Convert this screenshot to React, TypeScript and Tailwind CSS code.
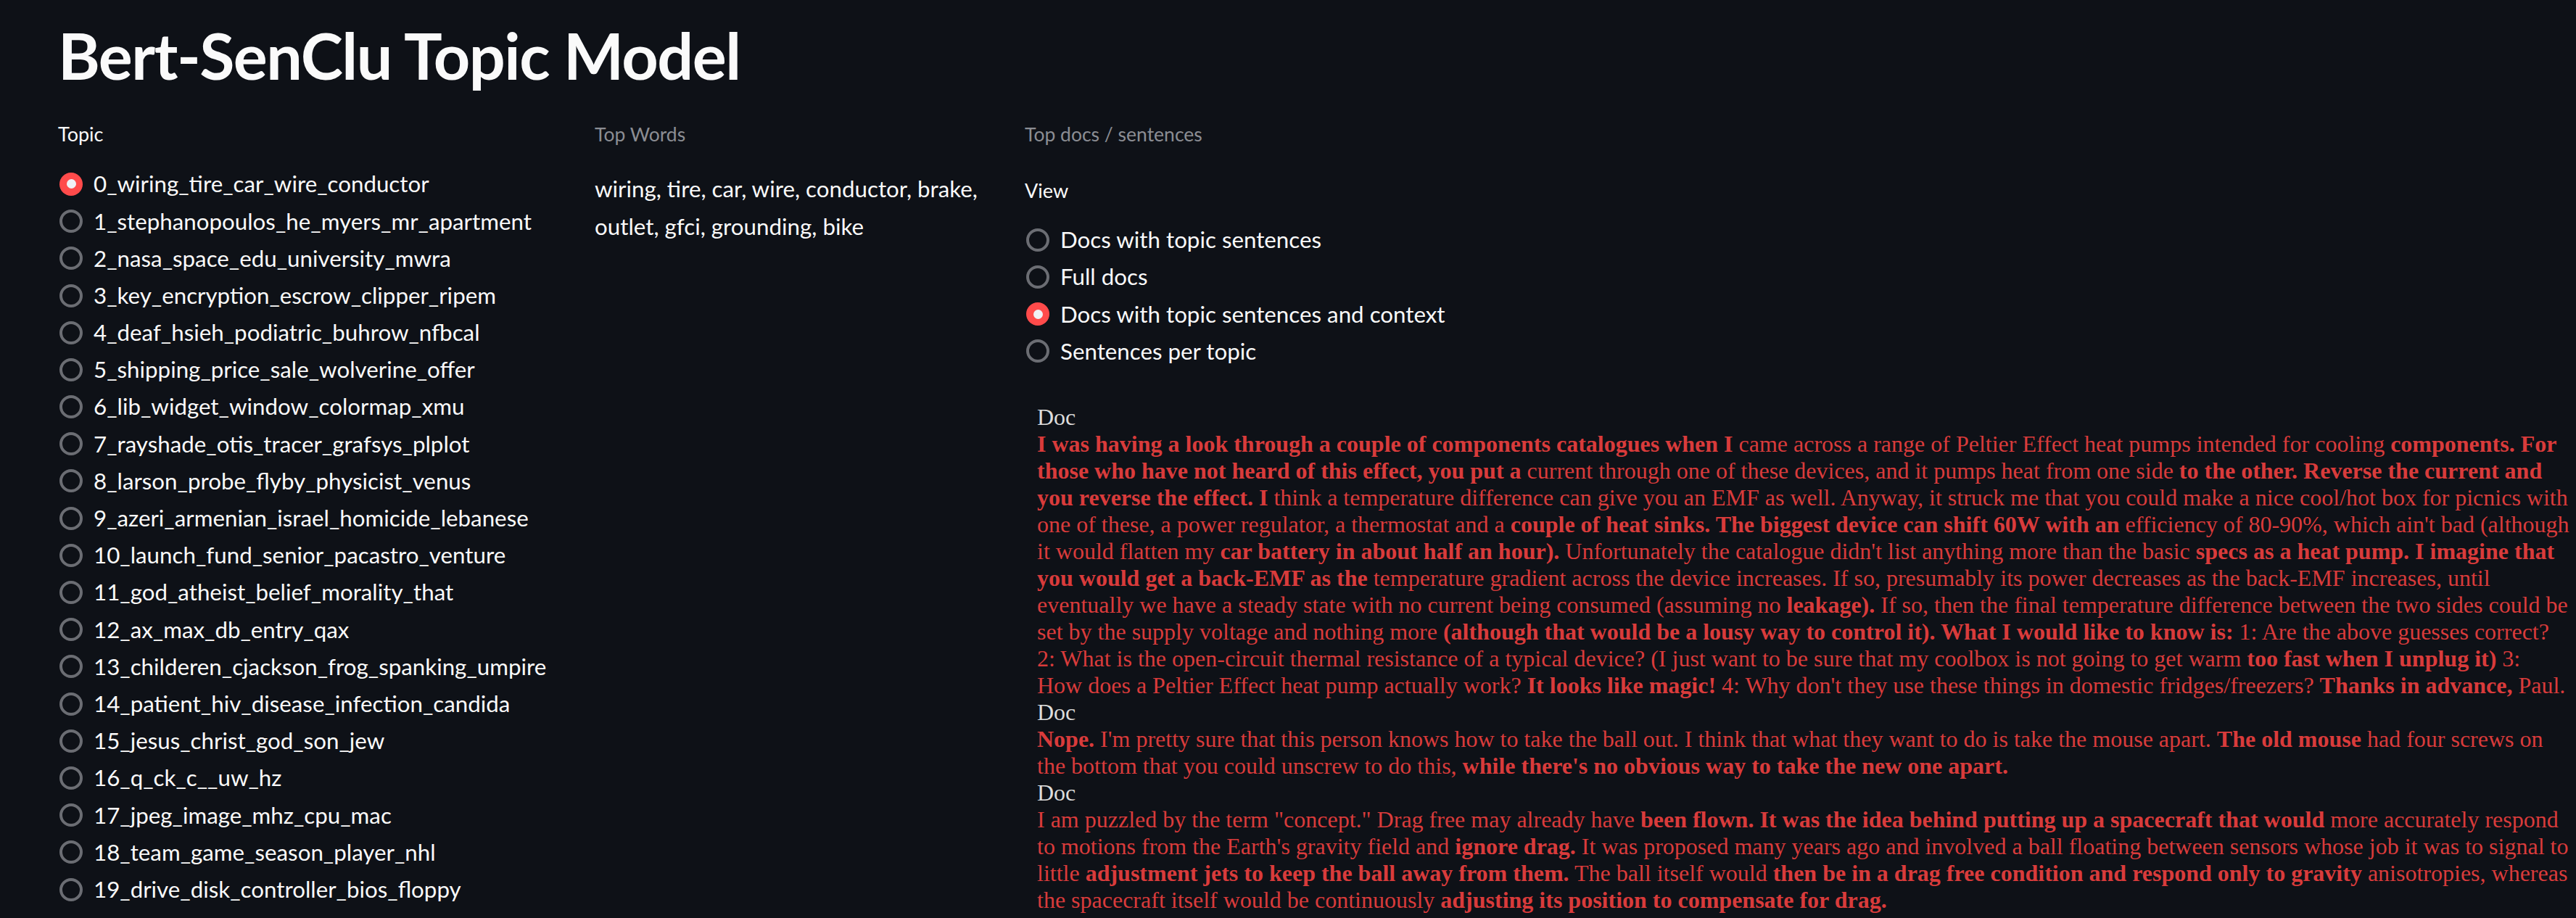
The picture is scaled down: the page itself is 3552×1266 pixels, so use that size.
import React from 'react';

const topics = [
  '0_wiring_tire_car_wire_conductor',
  '1_stephanopoulos_he_myers_mr_apartment',
  '2_nasa_space_edu_university_mwra',
  '3_key_encryption_escrow_clipper_ripem',
  '4_deaf_hsieh_podiatric_buhrow_nfbcal',
  '5_shipping_price_sale_wolverine_offer',
  '6_lib_widget_window_colormap_xmu',
  '7_rayshade_otis_tracer_grafsys_plplot',
  '8_larson_probe_flyby_physicist_venus',
  '9_azeri_armenian_israel_homicide_lebanese',
  '10_launch_fund_senior_pacastro_venture',
  '11_god_atheist_belief_morality_that',
  '12_ax_max_db_entry_qax',
  '13_childeren_cjackson_frog_spanking_umpire',
  '14_patient_hiv_disease_infection_candida',
  '15_jesus_christ_god_son_jew',
  '16_q_ck_c__uw_hz',
  '17_jpeg_image_mhz_cpu_mac',
  '18_team_game_season_player_nhl',
  '19_drive_disk_controller_bios_floppy',
];

const views = [
  'Docs with topic sentences',
  'Full docs',
  'Docs with topic sentences and context',
  'Sentences per topic',
];

// ** marks the sentences that belong to the topic
const docs: string[][] = [
  [
    '**I was having a look through a couple of components catalogues when I** came across a range of Peltier Effect heat pumps intended for cooling **components. For**',
    "**those who have not heard of this effect, you put a** current through one of these devices, and it pumps heat from one side **to the other. Reverse the current and**",
    '**you reverse the effect. I** think a temperature difference can give you an EMF as well. Anyway, it struck me that you could make a nice cool/hot box for picnics with',
    "one of these, a power regulator, a thermostat and a **couple of heat sinks. The biggest device can shift 60W with an** efficiency of 80-90%, which ain't bad (although",
    "it would flatten my **car battery in about half an hour).** Unfortunately the catalogue didn't list anything more than the basic **specs as a heat pump. I imagine that**",
    '**you would get a back-EMF as the** temperature gradient across the device increases. If so, presumably its power decreases as the back-EMF increases, until',
    'eventually we have a steady state with no current being consumed (assuming no **leakage).** If so, then the final temperature difference between the two sides could be',
    'set by the supply voltage and nothing more **(although that would be a lousy way to control it). What I would like to know is:** 1: Are the above guesses correct?',
    '2: What is the open-circuit thermal resistance of a typical device? (I just want to be sure that my coolbox is not going to get warm **too fast when I unplug it)** 3:',
    "How does a Peltier Effect heat pump actually work? **It looks like magic!** 4: Why don't they use these things in domestic fridges/freezers? **Thanks in advance,** Paul.",
  ],
  [
    "**Nope.** I'm pretty sure that this person knows how to take the ball out. I think that what they want to do is take the mouse apart. **The old mouse** had four screws on",
    "the bottom that you could unscrew to do this, **while there's no obvious way to take the new one apart.**",
  ],
  [
    'I am puzzled by the term "concept." Drag free may already have **been flown. It was the idea behind putting up a spacecraft that would** more accurately respond',
    "to motions from the Earth's gravity field and **ignore drag.** It was proposed many years ago and involved a ball floating between sensors whose job it was to signal to",
    'little **adjustment jets to keep the ball away from them.** The ball itself would **then be in a drag free condition and respond only to gravity** anisotropies, whereas',
    'the spacecraft itself would be continuously **adjusting its position to compensate for drag.**',
  ],
];

const Radio = ({ label, checked }: { label: string; checked?: boolean }) => (
  <div className="flex h-[51.2px] items-center">
    {checked ? (
      <span className="ml-[2px] flex h-[32px] w-[32px] shrink-0 items-center justify-center rounded-full bg-[#ff4b4b]">
        <span className="h-[13px] w-[13px] rounded-full bg-[#f0f2f6]" />
      </span>
    ) : (
      <span className="ml-[2px] h-[32px] w-[32px] shrink-0 rounded-full border-[4px] border-[#6b6d73]" />
    )}
    <span className="ml-[15px] whitespace-nowrap text-[31.3px] leading-none text-[#fafafa]">{label}</span>
  </div>
);

const DocLine = ({ text }: { text: string }) => (
  <div className="whitespace-nowrap">
    {text.split('**').map((part, i) =>
      i % 2 === 1 ? <b key={i} className="font-bold">{part}</b> : <span key={i}>{part}</span>
    )}
  </div>
);

export default function App() {
  return (
    <div className="min-h-[1266px] bg-[#0e1117] pl-[80px] font-['Lato',sans-serif] text-[#fafafa]">
      <h1 className="pt-[24px] text-[88px] font-bold leading-[1.2] tracking-[-1.5px]">Bert-SenClu Topic Model</h1>

      <div className="mt-[33px] grid grid-cols-[708px_561px_1fr] gap-x-[32px]">
        {/* Topic picker */}
        <div>
          <div className="text-[27px] leading-[44.8px]">Topic</div>
          <div className="mt-[21px]">
            {topics.map((t, i) => (
              <Radio key={t} label={t} checked={i === 0} />
            ))}
          </div>
        </div>

        {/* Top words */}
        <div>
          <div className="text-[26.5px] leading-[44.8px] text-[#8b8d93]">Top Words</div>
          <p className="mt-[28px] text-[31.3px] leading-[51.2px]">
            wiring, tire, car, wire, conductor, brake, outlet, gfci, grounding, bike
          </p>
        </div>

        {/* Top docs / sentences */}
        <div>
          <div className="text-[26.5px] leading-[44.8px] text-[#8b8d93]">Top docs / sentences</div>
          <div className="mt-[34px] text-[27px] leading-[44.8px]">View</div>
          <div className="mt-[19px]">
            {views.map((v, i) => (
              <Radio key={v} label={v} checked={i === 2} />
            ))}
          </div>

          <div className="mt-[47px] pl-[17px] font-['Liberation_Serif',serif] text-[32px] leading-[37px] text-[#d93b3b]">
            {docs.map((lines, d) => (
              <div key={d}>
                <div className="text-[#dcdcdc]">Doc</div>
                {lines.map((l, k) => (
                  <DocLine key={k} text={l} />
                ))}
              </div>
            ))}
          </div>
        </div>
      </div>
    </div>
  );
}
